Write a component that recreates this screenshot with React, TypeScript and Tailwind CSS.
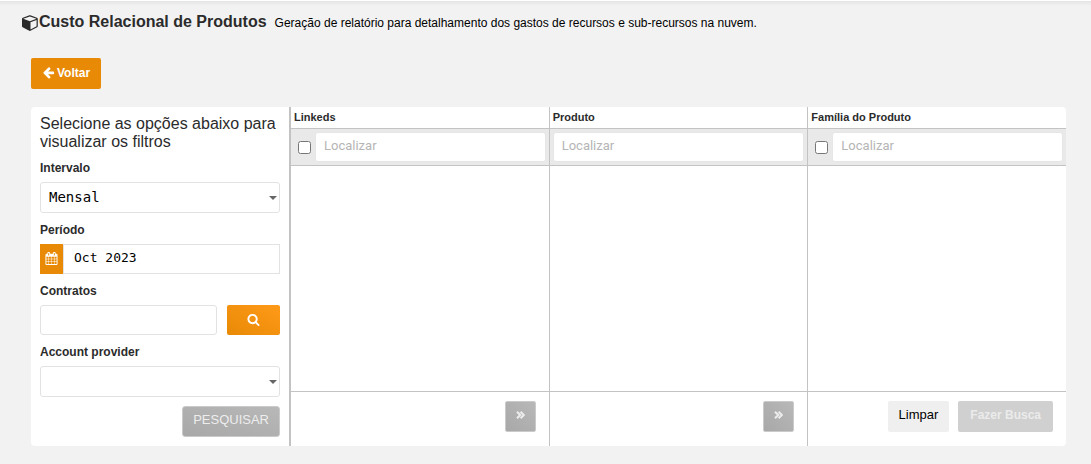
import React, { useState } from 'react';

const paths = {
  cube: 'M896 1629l640-349v-636l-640 233v752zm-64-865l698-254-698-254-698 254zm832-252v768q0 35-18 65t-49 47l-704 384q-28 16-61 16t-61-16l-704-384q-31-17-49-47t-18-65v-768q0-40 23-73t61-47l704-256q22-8 44-8t44 8l704 256q38 14 61 47t23 73z',
  arrowLeft:
    'M1664 896v128q0 53-32.5 90.5t-84.5 37.5h-704l293 294q38 36 38 90t-38 90l-75 76q-37 37-90 37-52 0-91-37l-651-652q-37-37-37-90 0-52 37-91l651-650q38-38 91-38 52 0 90 38l75 74q38 38 38 91t-38 91l-293 293h704q52 0 84.5 37.5t32.5 90.5z',
  calendar:
    'M192 1664h288v-288h-288v288zm352 0h320v-288h-320v288zm-352-352h288v-320h-288v320zm352 0h320v-320h-320v320zm-352-384h288v-288h-288v288zm736 736h320v-288h-320v288zm-384-736h320v-288h-320v288zm768 736h288v-288h-288v288zm-384-352h320v-320h-320v320zm-352-864v-288q0-13-9.5-22.5t-22.5-9.5h-64q-13 0-22.5 9.5t-9.5 22.5v288q0 13 9.5 22.5t22.5 9.5h64q13 0 22.5-9.5t9.5-22.5zm736 864h288v-320h-288v320zm-384-384h320v-288h-320v288zm384 0h288v-288h-288v288zm32-480v-288q0-13-9.5-22.5t-22.5-9.5h-64q-13 0-22.5 9.5t-9.5 22.5v288q0 13 9.5 22.5t22.5 9.5h64q13 0 22.5-9.5t9.5-22.5zm384-64v1280q0 52-38 90t-90 38h-1408q-52 0-90-38t-38-90v-1280q0-52 38-90t90-38h128v-96q0-66 47-113t113-47h64q66 0 113 47t47 113v96h384v-96q0-66 47-113t113-47h64q66 0 113 47t47 113v96h128q52 0 90 38t38 90z',
  search:
    'M1216 832q0-185-131.5-316.5t-316.5-131.5-316.5 131.5-131.5 316.5 131.5 316.5 316.5 131.5 316.5-131.5 131.5-316.5zm512 832q0 52-38 90t-90 38q-54 0-90-38l-343-342q-179 124-399 124-143 0-273.5-55.5t-225-150-150-225-55.5-273.5 55.5-273.5 150-225 225-150 273.5-55.5 273.5 55.5 225 150 150 225 55.5 273.5q0 220-124 399l343 343q37 37 37 90z',
};

function Icon({ name, className }: { name: keyof typeof paths; className: string }) {
  return (
    <svg viewBox="0 0 1792 1792" fill="currentColor" aria-hidden="true" className={className}>
      <path d={paths[name]} />
    </svg>
  );
}

const labelClass = 'mt-2 mb-[5px] block text-[12px] leading-[18px] font-bold';
const fieldClass = 'w-full min-w-0 border border-[#e2e2e2] bg-white text-black outline-none';

function SelectField({ id, label, options }: { id: string; label: string; options: string[] }) {
  return (
    <div>
      <label htmlFor={id} className={labelClass}>
        {label}
      </label>
      <div className="relative">
        <select
          id={id}
          className={`${fieldClass} h-[31px] appearance-none rounded-[3px] px-2 font-['DejaVu_Sans_Mono',monospace] text-[14px]`}
        >
          {options.map((o) => (
            <option key={o}>{o}</option>
          ))}
        </select>
        <svg
          viewBox="0 0 8 4"
          aria-hidden="true"
          className="pointer-events-none absolute top-[14px] right-[3px] h-1 w-2 text-[#666]"
        >
          <path d="M0 0h8L4 4z" fill="currentColor" />
        </svg>
      </div>
    </div>
  );
}

function FilterColumn({
  title,
  selectable,
  children,
}: {
  title: string;
  selectable?: boolean;
  children: React.ReactNode;
}) {
  return (
    <section className="flex min-w-0 flex-1 flex-col border-l border-[#c3c3c3] first:border-l-0">
      <h2 className="px-[3px] text-[11px] leading-[21px] font-bold">{title}</h2>
      <div className="flex items-center border-y border-[#c3c3c3] bg-[#e9e9e9] p-[3px]">
        {selectable && (
          <input
            type="checkbox"
            aria-label={`Selecionar todos: ${title}`}
            className="mr-1 ml-1 size-[13px] shrink-0"
          />
        )}
        <input
          type="text"
          aria-label={`Localizar em ${title}`}
          placeholder="Localizar"
          className="h-[30px] w-full min-w-0 rounded-[3px] border border-[#e6e6e6] bg-white px-2 pb-1 font-[Roboto,sans-serif] text-[13px] outline-none placeholder:text-[#b5b5b5]"
        />
      </div>
      <div className="flex-1" />
      <div className="flex h-[55px] items-start justify-end gap-[9px] border-t border-[#c3c3c3] pt-[9px] pr-[13px]">
        {children}
      </div>
    </section>
  );
}

function NextButton({ label }: { label: string }) {
  return (
    <button
      type="button"
      disabled
      aria-label={label}
      className="flex size-[31px] items-center justify-center rounded-[2px] border border-[#cacaca] bg-linear-to-tr from-[#a8a8a8] to-[#b8b8b8] pb-1 text-[#ededed]"
    >
      <svg viewBox="0 0 9 8" aria-hidden="true" fill="none" stroke="currentColor" strokeWidth="2" className="h-2 w-[9px]">
        <path d="M1 0.7L4.3 4L1 7.3M4.6 0.7L7.9 4L4.6 7.3" />
      </svg>
    </button>
  );
}

export default function App() {
  const [period, setPeriod] = useState('Oct 2023');
  return (
    <div className="min-h-screen bg-[#f2f2f2] font-['Liberation_Sans',Arial,sans-serif] text-[#2b2b2b]">
      <div className="h-[6px] border-t border-white bg-linear-to-b from-[#e5e5e5] to-[#f2f2f2]" />
      <header className="flex items-center px-[22px] pt-1">
        <h1 className="flex items-center text-[16px] leading-6 font-bold">
          <Icon name="cube" className="size-[17px]" />
          Custo Relacional de Produtos
        </h1>
        <p className="ml-2 pt-[2px] text-[12px] leading-5 text-black">
          Geração de relatório para detalhamento dos gastos de recursos e sub-recursos na nuvem.
        </p>
      </header>

      <main className="pt-6 pr-[25px] pb-[18px] pl-[31px]">
        <button
          type="button"
          className="flex h-[31px] items-center gap-[2px] rounded-[2px] bg-[#e88a05] px-[11px] pb-[2px] text-[12px] font-bold text-white"
        >
          <Icon name="arrowLeft" className="size-[13px]" />
          Voltar
        </button>

        <div className="mt-[18px] flex overflow-hidden rounded-[4px] bg-white">
          <form
            className="w-[260px] shrink-0 border-r-2 border-[#c3c3c3] px-[9px] pt-2 pb-[9px]"
            onSubmit={(e) => e.preventDefault()}
          >
            <p className="text-[16px] leading-[18px]">Selecione as opções abaixo para visualizar os filtros</p>

            <SelectField id="intervalo" label="Intervalo" options={['Mensal']} />

            <label htmlFor="periodo" className={labelClass}>
              Período
            </label>
            <div className="flex">
              <span className="flex w-[23px] shrink-0 items-center justify-center bg-[#e88a05] pb-[2px] text-white">
                <Icon name="calendar" className="size-[13px]" />
              </span>
              <input
                id="periodo"
                type="text"
                value={period}
                onChange={(e) => setPeriod(e.target.value)}
                className={`${fieldClass} h-[30px] px-[10px] pb-1 font-['DejaVu_Sans_Mono',monospace] text-[13px]`}
              />
            </div>

            <label htmlFor="contratos" className={labelClass}>
              Contratos
            </label>
            <div className="flex gap-[10px]">
              <input id="contratos" type="text" className={`${fieldClass} h-[30px] rounded-[3px] px-2 text-[13px]`} />
              <button
                type="button"
                aria-label="Buscar contratos"
                className="flex h-[30px] w-[53px] shrink-0 items-center justify-center rounded-[2px] bg-linear-to-tr from-[#e88a05] to-[#ff9a18] pb-[2px] text-white"
              >
                <Icon name="search" className="size-[13px]" />
              </button>
            </div>

            <SelectField id="provider" label="Account provider" options={['']} />

            <div className="mt-[9px] flex justify-end">
              <button
                type="submit"
                disabled
                className="h-[31px] rounded-[3px] border border-[#cacaca] bg-linear-to-tr from-[#a8a8a8] to-[#b8b8b8] px-[10px] pb-1 text-[13px] text-[#ededed]"
              >
                PESQUISAR
              </button>
            </div>
          </form>

          <div className="flex min-w-0 flex-1">
            <FilterColumn title="Linkeds" selectable>
              <NextButton label="Avançar para Produto" />
            </FilterColumn>
            <FilterColumn title="Produto">
              <NextButton label="Avançar para Família do Produto" />
            </FilterColumn>
            <FilterColumn title="Família do Produto" selectable>
              <button
                type="button"
                className="h-[31px] rounded-[2px] bg-[#efefef] px-[11px] pb-1 text-[13px] text-black"
              >
                Limpar
              </button>
              <button
                type="button"
                disabled
                className="h-[31px] rounded-[2px] bg-[#d0d0d0] px-3 pb-1 text-[12px] font-bold text-[#ebebeb]"
              >
                Fazer Busca
              </button>
            </FilterColumn>
          </div>
        </div>
      </main>
    </div>
  );
}
